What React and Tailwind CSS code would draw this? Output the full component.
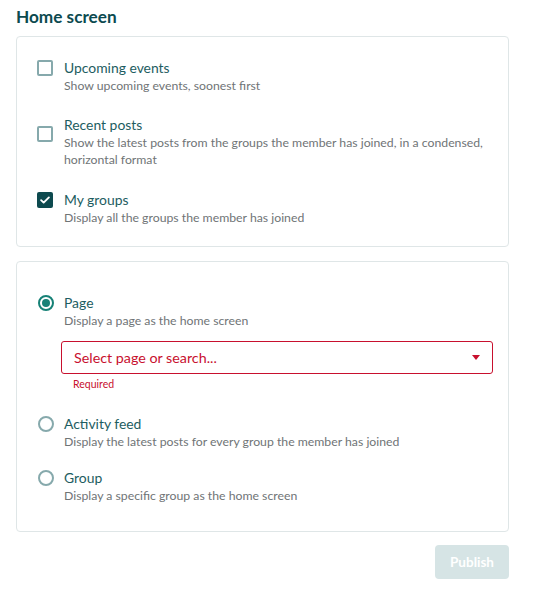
import { useState } from 'react'

const font = { fontFamily: 'Lato, "Open Sans", sans-serif' }

const homeItems = [
  { id: 'events', label: 'Upcoming events', desc: 'Show upcoming events, soonest first', box: 'mt-[1px]' },
  {
    id: 'posts',
    label: 'Recent posts',
    desc: 'Show the latest posts from the groups the member has joined, in a condensed, horizontal format',
    box: 'mt-[10px]',
  },
  { id: 'groups', label: 'My groups', desc: 'Display all the groups the member has joined', box: 'mt-[1px]' },
]

const Checkbox = ({ checked, className }) => (
  <span
    className={`flex h-4 w-4 shrink-0 items-center justify-center rounded-[2px] ${
      checked ? 'bg-[#0d4a4f]' : 'border-2 border-[#86a9ac] bg-white'
    } ${className}`}
  >
    {checked && (
      <svg viewBox="0 0 16 16" className="h-3 w-3" fill="none">
        <path d="M2.8 8.2l3.4 3.3L13.2 4.5" stroke="white" strokeWidth="2.5" strokeLinecap="round" strokeLinejoin="round" />
      </svg>
    )}
  </span>
)

const Radio = ({ checked }) => (
  <span
    className={`mt-[1px] flex h-4 w-4 shrink-0 items-center justify-center rounded-full border-2 ${
      checked ? 'border-[#168176]' : 'border-[#86a9ac]'
    } bg-white`}
  >
    {checked && <span className="h-2 w-2 rounded-full bg-[#168176]" />}
  </span>
)

export default function App() {
  const [checked, setChecked] = useState({ events: false, posts: false, groups: true })
  const [mode, setMode] = useState('page')

  return (
    <div className="min-h-screen bg-white px-4 pt-[7px]" style={font}>
      <h1 className="mb-[9px] text-[17.2px] font-bold leading-[20px] text-[#0c4a4f]">Home screen</h1>

      {/* Home screen sections */}
      <div className="w-[493px] rounded-[4px] border border-[#dfe6e7] pb-[20px] pl-[20px] pr-[15px] pt-[22px]">
        <div className="flex flex-col gap-[22px]">
          {homeItems.map((item, i) => (
            <label
              key={item.id}
              className={`flex cursor-pointer items-start gap-[11px] ${i === 2 ? 'mt-[1px]' : ''}`}
              onClick={() => setChecked(c => ({ ...c, [item.id]: !c[item.id] }))}
            >
              <Checkbox checked={checked[item.id]} className={item.box} />
              <div>
                <p className="text-[13.9px] leading-[18px] text-[#1d5d61]">{item.label}</p>
                <p className="text-[12.25px] leading-[17px] text-[#6f7476]">{item.desc}</p>
              </div>
            </label>
          ))}
        </div>
      </div>

      {/* Home screen type */}
      <div className="mt-[14px] w-[493px] rounded-[4px] border border-[#dfe6e7] pb-[27px] pl-[21px] pr-[15px] pt-[32px]">
        <div className="flex cursor-pointer items-start gap-[10px]" onClick={() => setMode('page')}>
          <Radio checked={mode === 'page'} />
          <div>
            <p className="text-[13.9px] leading-[18px] text-[#1d5d61]">Page</p>
            <p className="text-[12.25px] leading-[17px] text-[#6f7476]">Display a page as the home screen</p>
          </div>
        </div>
        <div className="ml-[23px]">
          <div className="mt-[12px] flex h-[33px] items-center justify-between rounded-[3px] border border-[#c8102e] px-3">
            <span className="text-[14.3px] text-[#c8102e]">Select page or search...</span>
            <svg viewBox="0 0 8 5" className="h-[5px] w-[8px]">
              <path d="M0 0h8L4 5z" fill="#c8102e" />
            </svg>
          </div>
          <p className="ml-3 mt-[3px] text-[10.5px] leading-[14px] text-[#c8102e]">Required</p>
        </div>

        <div className="mt-[24px] flex cursor-pointer items-start gap-[10px]" onClick={() => setMode('feed')}>
          <Radio checked={mode === 'feed'} />
          <div>
            <p className="text-[13.9px] leading-[18px] text-[#1d5d61]">Activity feed</p>
            <p className="text-[12.25px] leading-[17px] text-[#6f7476]">
              Display the latest posts for every group the member has joined
            </p>
          </div>
        </div>

        <div className="mt-[19px] flex cursor-pointer items-start gap-[10px]" onClick={() => setMode('group')}>
          <Radio checked={mode === 'group'} />
          <div>
            <p className="text-[13.9px] leading-[18px] text-[#1d5d61]">Group</p>
            <p className="text-[12.25px] leading-[17px] text-[#6f7476]">Display a specific group as the home screen</p>
          </div>
        </div>
      </div>

      <div className="flex w-[493px] justify-end">
        <button className="mt-[13px] h-[34px] w-[74px] rounded-[4px] bg-[#d6e4e5] text-[13.5px] font-bold text-white">
          Publish
        </button>
      </div>
    </div>
  )
}
